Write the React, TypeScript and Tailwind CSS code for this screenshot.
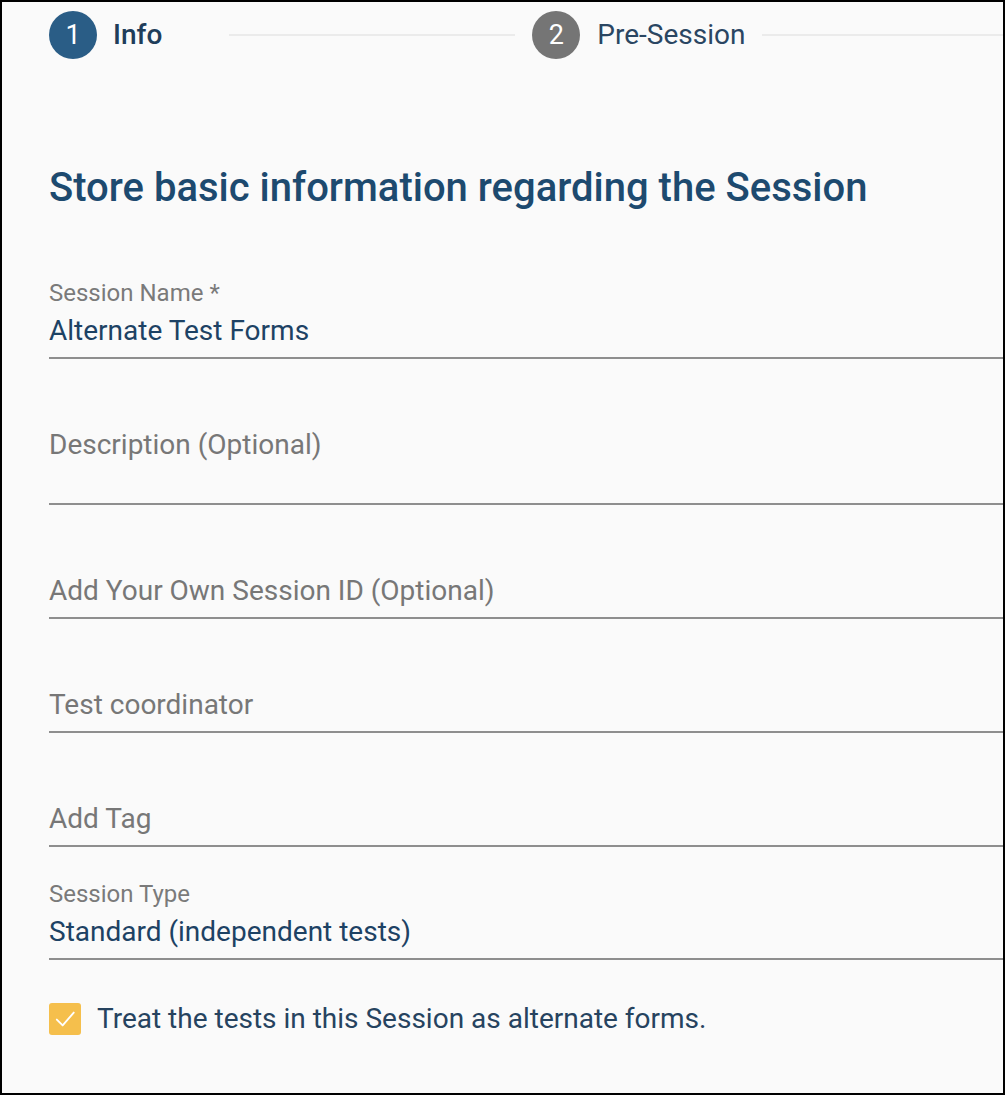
import React from 'react'

const font = { fontFamily: 'Roboto, "Noto Sans", sans-serif' }

function Field({ label, value, placeholder, tall, top }: { label?: string; value?: string; placeholder?: string; tall?: boolean; top?: string }) {
  return (
    <div className="border-b-2 border-[#8e8e8e]">
      {label ? (
        <div className={top}>
          <div className="text-[24px] leading-[28px] text-[#7a7a7a]">{label}</div>
          <div className="mt-[8px] text-[28px] leading-[32px] text-[#1d4264]">{value}</div>
        </div>
      ) : (
        <div className="pt-[70px]">
          <div className="text-[28px] leading-[32px] text-[#777777]">{placeholder}</div>
        </div>
      )}
      <div className={tall ? 'h-[42px]' : 'h-[10px]'}></div>
    </div>
  )
}

export default function App() {
  return (
    <div style={font} className="w-[1005px] h-[1095px] border-2 border-black bg-[#fafafa] overflow-hidden">
      <div className="flex items-center h-[66px] pl-[47px]">
        <div className="w-[48px] h-[48px] rounded-full bg-[#2a5d86] flex items-center justify-center text-white text-[27px]">1</div>
        <div className="ml-[16px] text-[28px] font-medium text-[#1f3d5a]">Info</div>
        <div className="ml-[67px] w-[286px] h-[2px] bg-[#ebebeb]"></div>
        <div className="ml-[17px] w-[48px] h-[48px] rounded-full bg-[#757575] flex items-center justify-center text-white text-[27px]">2</div>
        <div className="ml-[17px] text-[28px] text-[#2a4662]">Pre-Session</div>
        <div className="ml-[17px] flex-1 h-[2px] bg-[#ebebeb]"></div>
      </div>

      <div className="pl-[47px]">
        <h1 className="mt-[96px] text-[40px] leading-[48px] font-medium text-[#1d4a6f]">
          Store basic information regarding the Session
        </h1>

        <Field label="Session Name *" value="Alternate Test Forms" top="pt-[67px]" />
        <Field placeholder="Description (Optional)" tall />
        <Field placeholder="Add Your Own Session ID (Optional)" />
        <Field placeholder="Test coordinator" />
        <Field placeholder="Add Tag" />
        <Field label="Session Type" value="Standard (independent tests)" top="pt-[33px]" />

        <div className="mt-[43px] flex items-center gap-[16px]">
          <div className="w-[32px] h-[32px] rounded-[3px] bg-[#f5bf4c] flex items-center justify-center">
            <svg width="28" height="28" viewBox="0 0 24 24" fill="none" stroke="white" strokeWidth="1.6" strokeLinecap="round" strokeLinejoin="round">
              <polyline points="5,12.5 10,17.5 19.5,6.5" />
            </svg>
          </div>
          <div className="text-[28px] leading-[32px] text-[#26435f]">Treat the tests in this Session as alternate forms.</div>
        </div>
      </div>
    </div>
  )
}
